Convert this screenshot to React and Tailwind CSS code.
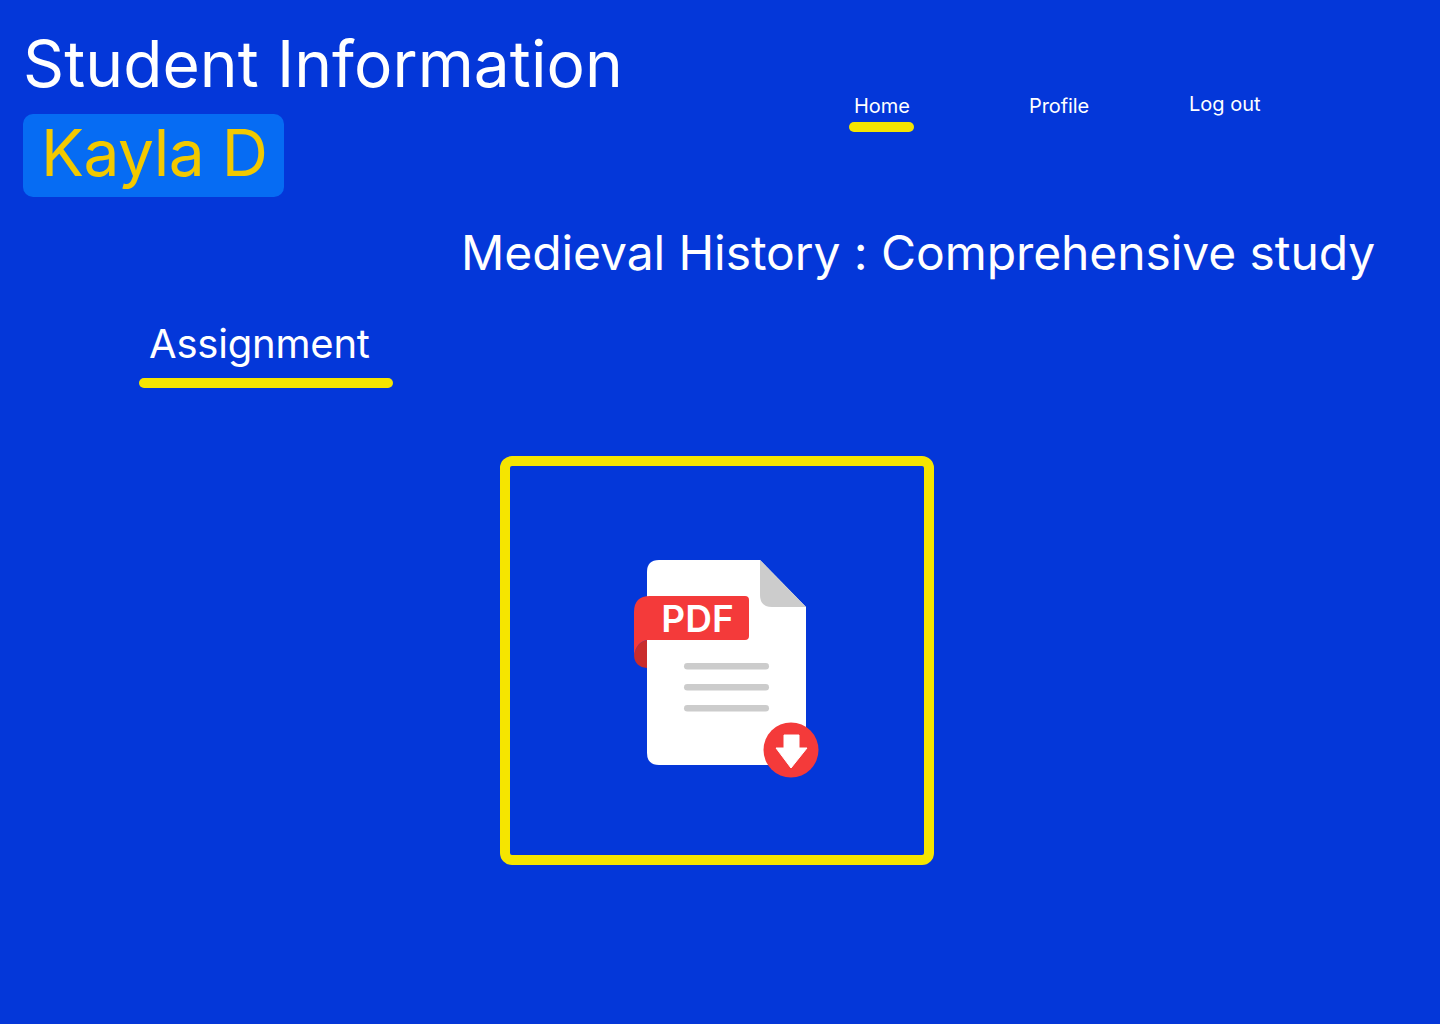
import React from "react";

const PdfIcon = () => (
  <svg width="230" height="250" viewBox="0 0 230 250" fill="none">
    {/* page */}
    <path
      d="M49 20H150L196 67V213Q196 225 184 225H49Q37 225 37 213V32Q37 20 49 20Z"
      fill="#ffffff"
    />
    {/* folded corner */}
    <path d="M150 20L196 67H162Q150 67 150 55Z" fill="#cccccc" />
    {/* ribbon curl */}
    <path d="M37 100Q26 102 24 116Q25 127 37 128Z" fill="#c92c2c" />
    <path
      d="M40 56H135Q139 56 139 60V96Q139 100 135 100H37Q26 102 24 116V72Q24 56 40 56Z"
      fill="#f43a3a"
    />
    <text
      x="87.5"
      y="92"
      textAnchor="middle"
      fontFamily="Inter, sans-serif"
      fontSize="37"
      fontWeight="600"
      fill="#ffffff"
    >
      PDF
    </text>
    {/* lines */}
    <rect x="74" y="123" width="85" height="6.5" rx="3.25" fill="#cccccc" />
    <rect x="74" y="144" width="85" height="6.5" rx="3.25" fill="#cccccc" />
    <rect x="74" y="165" width="85" height="6.5" rx="3.25" fill="#cccccc" />
    {/* download badge */}
    <circle cx="181" cy="210" r="27.5" fill="#f43a3a" />
    <path
      d="M174 195H189V208H197L181 228L166 208H174Z"
      fill="#ffffff"
      stroke="#ffffff"
      strokeWidth="1"
      strokeLinejoin="round"
    />
  </svg>
);

const App = () => {
  return (
    <div className="w-[1440px] min-h-[1024px] bg-[#0437d9] font-['Inter',sans-serif] text-white overflow-hidden [font-feature-settings:'calt'_0] [font-optical-sizing:none]">
      {/* Header */}
      <div className="flex items-start">
        <div className="pl-[23px] pt-[25px] w-[849px] shrink-0">
          <h1 className="text-[64px] leading-[77px] font-normal tracking-[0.1px]">Student Information</h1>
          <div className="mt-[12px] w-[261px] h-[83px] rounded-[10px] bg-[#066cf3] pl-[18px] text-[64px] leading-[77px] tracking-[-0.5px] text-[#f2c900]">
            Kayla D
          </div>
        </div>

        <nav className="flex items-start pt-[94px] text-[20px] leading-[24px]">
          <div className="w-[65px] flex flex-col items-center">
            <span className="pl-px">Home</span>
            <div className="mt-[4px] w-[65px] h-[10px] rounded-full bg-[#f5e500]" />
          </div>
          <span className="ml-[115px] tracking-[-0.1px]">Profile</span>
          <span className="ml-[100px] -mt-[2px]">Log out</span>
        </nav>
      </div>

      {/* Course title */}
      <h2 className="mt-[27px] pl-[461px] text-[48px] leading-[58px] font-normal tracking-[-0.08px] whitespace-nowrap">
        Medieval History : Comprehensive study
      </h2>

      {/* Assignment tab */}
      <div className="mt-[38px] ml-[139px] w-[254px]">
        <div className="pl-[10px] text-[40px] leading-[48px] tracking-[-0.2px]">Assignment</div>
        <div className="mt-[10px] h-[10px] rounded-full bg-[#f5e500]" />
      </div>

      {/* Assignment card */}
      <div className="mt-[68px] ml-[500px] w-[434px] h-[409px] rounded-[12px] border-[10px] border-[#f5e500] flex items-center justify-center pl-[16px] pt-[8px]">
        <PdfIcon />
      </div>
    </div>
  );
};

export default App;
